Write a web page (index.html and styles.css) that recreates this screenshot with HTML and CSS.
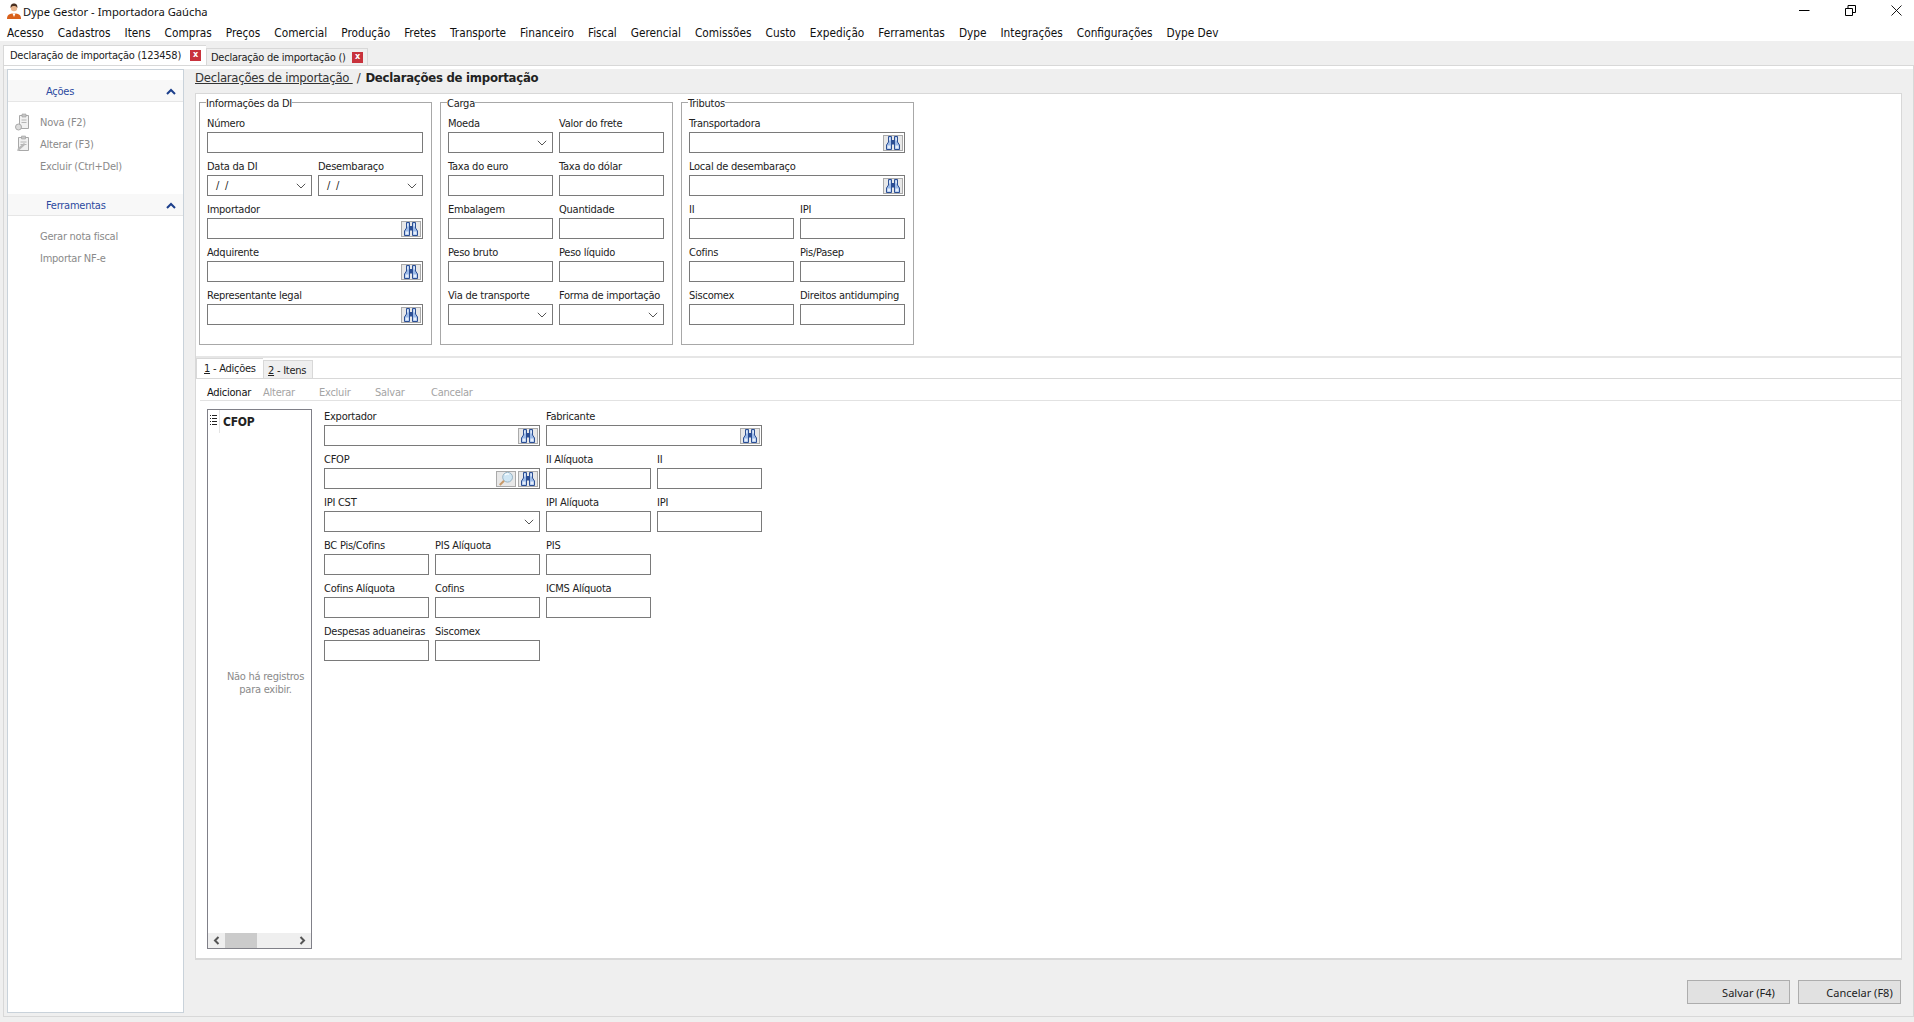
FILE: index.html
```html
<!DOCTYPE HTML>
<html>
    <head>
        <title>Dype Gestor - Importadora Gaúcha</title>
        <link rel="stylesheet" href="styles.css">
    </head>
    <body>
        <svg class="icon-defs" width="0" height="0">
            <symbol id="binoculars" viewBox="0 0 16 16">
                <path d="M3.500 1.500h3v13h-5v-4.500l2-3z" fill="#9dbbe8" stroke="#2c4f94"/>
                <path d="M12.500 1.500h-3v13h5v-4.500l-2-3z" fill="#9dbbe8" stroke="#2c4f94"/>
                <path d="M6.500 5h3v4.500h-3z" fill="#2c4f94"/>
                <path d="M2.500 10.500h3v3h-3zM10.500 10.500h3v3h-3z" fill="#e6eefa"/>
                <path d="M4 2.500h1.500v3H4zM10.500 2.500H12v3h-1.500z" fill="#dce8f8"/>
            </symbol>
            <symbol id="magnifier" viewBox="0 0 16 16">
                <circle cx="9.600" cy="6.200" r="4.900" fill="#cfe6f4" stroke="#9ab4c4"/>
                <path d="M7 4.200a3.400 3.400 0 0 1 4-1" fill="none" stroke="#fff" stroke-width="1.200"/>
                <path d="M6 9.800 1.800 14" stroke="#c79a6a" stroke-width="2"/>
            </symbol>
            <symbol id="chevron" viewBox="0 0 10 6">
                <path d="M.8.800 5 5 9.200.800" fill="none" stroke="#555" stroke-width="1"/>
            </symbol>
            <symbol id="chevron-up" viewBox="0 0 10 7">
                <path d="M1 6 5 2l4 4" fill="none" stroke="#1c3f8c" stroke-width="2"/>
            </symbol>
            <symbol id="clip-new" viewBox="0 0 16 18">
                <path d="M4.500 2.500h9v13h-9z" fill="#f1f1f1" stroke="#a8a8a8"/>
                <path d="M7 1h4v3H7z" fill="#c6c6c6" stroke="#a0a0a0" stroke-width=".6"/>
                <path d="M6.500 7h5M6.500 9.500h5" stroke="#b5b5b5"/>
                <circle cx="3.500" cy="14" r="3" fill="#dcdcdc" stroke="#aaa"/>
            </symbol>
            <symbol id="clip-edit" viewBox="0 0 16 18">
                <path d="M3.500 2.500h10v13h-10z" fill="#f1f1f1" stroke="#a8a8a8"/>
                <path d="M6.500 1h4v3h-4z" fill="#c6c6c6" stroke="#a0a0a0" stroke-width=".6"/>
                <path d="M5.500 7h6M5.500 9.500h6" stroke="#b5b5b5"/>
                <path d="M2 16l1-3 6-5 1.500 1.500-6 5.500z" fill="#b8b8b8"/>
            </symbol>
        </svg>

        <div class="title-bar">
            <svg class="app-icon" viewBox="0 0 16 16" width="16" height="16">
                <path d="M1 16c0-4 2-5.500 7-5.500s7 1.500 7 5.500z" fill="#d9601a"/>
                <path d="M6.500 10.500h3L8 14z" fill="#fff"/>
                <circle cx="8" cy="5" r="3.200" fill="#e8b48c"/>
                <path d="M4.600 5C4.400 1.500 6 .5 8 .5s3.600 1 3.400 4.500C10.500 3.300 9 3 8 3S5.500 3.300 4.600 5z" fill="#4a3020"/>
            </svg>
            <span class="title-text">Dype Gestor - Importadora Gaúcha</span>
            <div class="window-buttons">
                <svg width="11" height="11" viewBox="0 0 11 11"><path d="M0 5.500h10.500" stroke="#000"/></svg>
                <svg width="11" height="11" viewBox="0 0 11 11"><path d="M.5 3.500h7v7h-7zM3 3.500V.5h7.500v7H7.500" fill="none" stroke="#000"/></svg>
                <svg width="11" height="11" viewBox="0 0 11 11"><path d="M.5.500l10 10M10.500.500l-10 10" stroke="#000" stroke-width=".9"/></svg>
            </div>
        </div>

        <div class="menu-bar">
            <span>Acesso</span><span>Cadastros</span><span>Itens</span><span>Compras</span><span>Preços</span><span>Comercial</span><span>Produção</span><span>Fretes</span><span>Transporte</span><span>Financeiro</span><span>Fiscal</span><span>Gerencial</span><span>Comissões</span><span>Custo</span><span>Expedição</span><span>Ferramentas</span><span>Dype</span><span>Integrações</span><span>Configurações</span><span>Dype Dev</span>
        </div>

        <div class="doc-tabs">
            <div class="doc-tab active">Declaração de importação (123458)<span class="tab-close">x</span></div>
            <div class="doc-tab">Declaração de importação ()<span class="tab-close">x</span></div>
        </div>

        <div class="tab-page">
            <div class="side-panel">
                <div class="side-head"><span>Ações</span><svg width="10" height="7"><use href="#chevron-up"/></svg></div>
                <div class="side-items">
                    <div class="side-item"><svg width="16" height="18"><use href="#clip-new"/></svg>Nova (F2)</div>
                    <div class="side-item"><svg width="16" height="18"><use href="#clip-edit"/></svg>Alterar (F3)</div>
                    <div class="side-item">Excluir (Ctrl+Del)</div>
                </div>
                <div class="side-head"><span>Ferramentas</span><svg width="10" height="7"><use href="#chevron-up"/></svg></div>
                <div class="side-items">
                    <div class="side-item">Gerar nota fiscal</div>
                    <div class="side-item">Importar NF-e</div>
                </div>
            </div>

            <div class="main">
                <div class="breadcrumb"><a>Declarações de importação </a><span class="crumb-sep">/</span><b>Declarações de importação</b></div>

                <div class="panel">
                    <div class="top-groups">
                        <fieldset class="group">
                            <legend>Informações da DI</legend>
                            <div class="fields two">
                                <div class="field wide"><label>Número</label><div class="box"></div></div>
                                <div class="field"><label>Data da DI</label><div class="box"><span class="box-text">/ /</span><svg class="drop" width="10" height="6"><use href="#chevron"/></svg></div></div>
                                <div class="field"><label>Desembaraço</label><div class="box"><span class="box-text">/ /</span><svg class="drop" width="10" height="6"><use href="#chevron"/></svg></div></div>
                                <div class="field wide"><label>Importador</label><div class="box"><span class="look"><svg width="16" height="16"><use href="#binoculars"/></svg></span></div></div>
                                <div class="field wide"><label>Adquirente</label><div class="box"><span class="look"><svg width="16" height="16"><use href="#binoculars"/></svg></span></div></div>
                                <div class="field wide"><label>Representante legal</label><div class="box"><span class="look"><svg width="16" height="16"><use href="#binoculars"/></svg></span></div></div>
                            </div>
                        </fieldset>
                        <fieldset class="group">
                            <legend>Carga</legend>
                            <div class="fields two">
                                <div class="field"><label>Moeda</label><div class="box"><svg class="drop" width="10" height="6"><use href="#chevron"/></svg></div></div>
                                <div class="field"><label>Valor do frete</label><div class="box"></div></div>
                                <div class="field"><label>Taxa do euro</label><div class="box"></div></div>
                                <div class="field"><label>Taxa do dólar</label><div class="box"></div></div>
                                <div class="field"><label>Embalagem</label><div class="box"></div></div>
                                <div class="field"><label>Quantidade</label><div class="box"></div></div>
                                <div class="field"><label>Peso bruto</label><div class="box"></div></div>
                                <div class="field"><label>Peso líquido</label><div class="box"></div></div>
                                <div class="field"><label>Via de transporte</label><div class="box"><svg class="drop" width="10" height="6"><use href="#chevron"/></svg></div></div>
                                <div class="field"><label>Forma de importação</label><div class="box"><svg class="drop" width="10" height="6"><use href="#chevron"/></svg></div></div>
                            </div>
                        </fieldset>
                        <fieldset class="group">
                            <legend>Tributos</legend>
                            <div class="fields two">
                                <div class="field wide"><label>Transportadora</label><div class="box"><span class="look"><svg width="16" height="16"><use href="#binoculars"/></svg></span></div></div>
                                <div class="field wide"><label>Local de desembaraço</label><div class="box"><span class="look"><svg width="16" height="16"><use href="#binoculars"/></svg></span></div></div>
                                <div class="field"><label>II</label><div class="box"></div></div>
                                <div class="field"><label>IPI</label><div class="box"></div></div>
                                <div class="field"><label>Cofins</label><div class="box"></div></div>
                                <div class="field"><label>Pis/Pasep</label><div class="box"></div></div>
                                <div class="field"><label>Siscomex</label><div class="box"></div></div>
                                <div class="field"><label>Direitos antidumping</label><div class="box"></div></div>
                            </div>
                        </fieldset>
                    </div>

                    <div class="sub-tabs">
                        <div class="sub-tab active"><u>1</u> - Adições</div>
                        <div class="sub-tab"><u>2</u> - Itens</div>
                    </div>
                    <div class="toolbar">
                        <span class="tool-add">Adicionar</span>
                        <span>Alterar</span>
                        <span>Excluir</span>
                        <span>Salvar</span>
                        <span>Cancelar</span>
                    </div>

                    <div class="detail">
                        <div class="list-box">
                            <div class="list-head"><span class="list-marker"><svg width="7" height="11" viewBox="0 0 7 11"><path d="M0 .5h1M2 .5h5M0 3.500h1M2 3.500h5M0 6.500h1M2 6.500h5M0 9.500h1M2 9.500h5" stroke="#222"/></svg></span><b>CFOP</b></div>
                            <div class="list-empty">Não há registros<br>para exibir.</div>
                            <div class="list-scroll">
                                <svg width="7" height="9" viewBox="0 0 7 9"><path d="M5.500 1 2 4.500 5.500 8" fill="none" stroke="#555" stroke-width="2"/></svg>
                                <span class="scroll-thumb"></span>
                                <svg width="7" height="9" viewBox="0 0 7 9"><path d="M1.500 1 5 4.500 1.500 8" fill="none" stroke="#555" stroke-width="2"/></svg>
                            </div>
                        </div>
                        <div class="fields four">
                            <div class="field wide"><label>Exportador</label><div class="box"><span class="look"><svg width="16" height="16"><use href="#binoculars"/></svg></span></div></div>
                            <div class="field wide"><label>Fabricante</label><div class="box"><span class="look"><svg width="16" height="16"><use href="#binoculars"/></svg></span></div></div>
                            <div class="field wide"><label>CFOP</label><div class="box"><span class="look"><svg width="16" height="16"><use href="#magnifier"/></svg></span><span class="look"><svg width="16" height="16"><use href="#binoculars"/></svg></span></div></div>
                            <div class="field"><label>II Alíquota</label><div class="box"></div></div>
                            <div class="field"><label>II</label><div class="box"></div></div>
                            <div class="field wide"><label>IPI CST</label><div class="box"><svg class="drop" width="10" height="6"><use href="#chevron"/></svg></div></div>
                            <div class="field"><label>IPI Alíquota</label><div class="box"></div></div>
                            <div class="field"><label>IPI</label><div class="box"></div></div>
                            <div class="field"><label>BC Pis/Cofins</label><div class="box"></div></div>
                            <div class="field"><label>PIS Alíquota</label><div class="box"></div></div>
                            <div class="field end-row"><label>PIS</label><div class="box"></div></div>
                            <div class="field"><label>Cofins Alíquota</label><div class="box"></div></div>
                            <div class="field"><label>Cofins</label><div class="box"></div></div>
                            <div class="field end-row"><label>ICMS Alíquota</label><div class="box"></div></div>
                            <div class="field"><label>Despesas aduaneiras</label><div class="box"></div></div>
                            <div class="field"><label>Siscomex</label><div class="box"></div></div>
                        </div>
                    </div>
                </div>

                <div class="footer">
                    <button class="btn">Salvar (F4)</button>
                    <button class="btn">Cancelar (F8)</button>
                </div>
            </div>
        </div>
    </body>
</html>
```

FILE: styles.css
```css
* {
    box-sizing: border-box;
}
body {
    margin: 0;
    height: 1022px;
    overflow: hidden;
    display: flex;
    flex-direction: column;
    background-color: #efefef;
    font-family: "DejaVu Sans Condensed", "DejaVu Sans", sans-serif;
    font-stretch: condensed;
    font-size: 11px;
    letter-spacing: -0.25px;
    color: #222;
    white-space: nowrap;
}
.icon-defs {
    position: absolute;
}
.title-bar {
    height: 22px;
    flex: none;
    display: flex;
    align-items: center;
    padding: 0 0 0 6px;
    background-color: white;
    font-family: "Noto Sans", sans-serif;
    font-stretch: normal;
    font-size: 11.2px;
    letter-spacing: 0;
    color: #111;
}
.app-icon {
    margin-right: 1px;
}
.window-buttons {
    margin-left: auto;
    display: flex;
    gap: 35px;
    padding-right: 12px;
    margin-top: -1px;
}
.menu-bar {
    height: 19px;
    flex: none;
    display: flex;
    align-items: center;
    padding-top: 3px;
    background-color: white;
    font-size: 11.75px;
    letter-spacing: 0;
    color: #111;
}
.menu-bar span {
    padding: 0 7px;
}
.doc-tabs {
    height: 24px;
    flex: none;
    display: flex;
    align-items: flex-end;
    padding-left: 3px;
}
.doc-tab {
    height: 17px;
    display: flex;
    align-items: center;
    justify-content: space-between;
    width: 162px;
    padding: 0 4px 0 4px;
    background-color: #efefef;
    border: 1px solid #d8d8d8;
    border-bottom: none;
}
.doc-tab.active {
    width: 203px;
    height: 20px;
    padding: 0 5px 0 6px;
    background-color: white;
    border-right: none;
}
.tab-close {
    width: 11px;
    height: 11px;
    flex: none;
    background-color: #c8323c;
    color: white;
    font-size: 9px;
    font-weight: bold;
    line-height: 9px;
    text-align: center;
}
.tab-page {
    flex: none;
    height: 952px;
    margin-left: 3px;
    display: flex;
    padding: 0 11px 3px 3px;
    border: 1px solid #d8d8d8;
    background-color: #efefef;
    background-image: linear-gradient(white, white);
    background-size: 100% 3px;
    background-repeat: no-repeat;
}
.side-panel {
    width: 177px;
    margin-top: 3px;
    flex: none;
    background-color: white;
    border: 1px solid #c9d2da;
    padding-top: 10px;
    color: #8a8a8a;
}
.side-head {
    height: 22px;
    display: flex;
    align-items: center;
    justify-content: space-between;
    padding: 2px 7px 0 38px;
    background-color: #f8f8f8;
    border-bottom: 1px solid #e6e6e6;
    color: #2c4aa0;
}
.side-items {
    padding: 9px 0 17px;
}
.side-item {
    height: 22px;
    position: relative;
    display: flex;
    align-items: center;
    padding-left: 32px;
}
.side-item svg {
    position: absolute;
    left: 7px;
    top: 2px;
}
.main {
    flex: 1;
    min-width: 0;
    margin-left: 11px;
    display: flex;
    flex-direction: column;
}
.breadcrumb {
    height: 27px;
    flex: none;
    padding-bottom: 4px;
    font-size: 13px;
    display: flex;
    align-items: center;
    color: #333;
    white-space: pre;
}
.breadcrumb a {
    text-decoration: underline;
}
.crumb-sep {
    margin: 0 5px 0 4px;
}
.breadcrumb b {
    color: #222;
}
.panel {
    height: 867px;
    flex: none;
    background-color: white;
    border: 1px solid #d8d8d8;
    border-width: 1px 1px 2px 1px;
    display: flex;
    flex-direction: column;
}
.top-groups {
    height: 264px;
    flex: none;
    display: flex;
    gap: 8px;
    padding: 0 3px;
    border-bottom: 2px solid #e6e6e6;
}
.group {
    width: 233px;
    height: 252px;
    margin: -1px 0 0;
    padding: 0 7px;
    min-width: 0;
    border: 1px solid #a8a8a8;
}
.group legend {
    padding: 4px 0 0;
    line-height: 14px;
    margin-left: -1px;
}
.fields {
    display: grid;
    column-gap: 6px;
}
.two {
    grid-template-columns: 105px 105px;
}
.four {
    grid-template-columns: 105px 105px 105px 105px;
    align-content: start;
}
.field {
    height: 43px;
    display: flex;
    flex-direction: column;
    justify-content: flex-end;
    padding-bottom: 1px;
}
.wide {
    grid-column: span 2;
}
.end-row {
    grid-column-end: span 2;
}
.field label {
    height: 21px;
    line-height: 26px;
}
.box {
    height: 21px;
    flex: none;
    display: flex;
    align-items: center;
    justify-content: flex-end;
    gap: 2px;
    padding-right: 1px;
    border: 1px solid #7a7a7a;
    background-color: white;
}
.end-row .box {
    width: 105px;
}
.box-text {
    margin-right: auto;
    padding-left: 8px;
    word-spacing: 3px;
}
.drop {
    margin-right: 4px;
}
.look {
    width: 20px;
    height: 16px;
    display: flex;
    align-items: center;
    justify-content: center;
    background-color: #e8e8e8;
    border: 1px solid #aaa;
}
.sub-tabs {
    height: 21px;
    flex: none;
    display: flex;
    align-items: flex-end;
    border-bottom: 1px solid #d8d8d8;
}
.sub-tab {
    height: 18px;
    display: flex;
    align-items: center;
    white-space: pre;
    width: 50px;
    padding: 1px 4px 0;
    background-color: #efefef;
    border: 1px solid #d8d8d8;
    border-bottom: none;
}
.sub-tab.active {
    height: 20px;
    width: 67px;
    padding: 0 7px;
    background-color: white;
    border-right: none;
}
.toolbar {
    height: 22px;
    flex: none;
    display: flex;
    align-items: center;
    margin-left: 4px;
    padding: 5px 0 0 7px;
    border-bottom: 1px solid #e2e2e2;
    color: #a4a4a4;
}
.toolbar span {
    width: 56px;
}
.toolbar .tool-add {
    color: #111;
}
.detail {
    flex: 1;
    min-height: 0;
    display: flex;
    gap: 12px;
    padding: 8px 0 9px 11px;
}
.detail .fields {
    margin-top: -5px;
}
.list-box {
    width: 105px;
    flex: none;
    display: flex;
    flex-direction: column;
    border: 1px solid #808088;
}
.list-head {
    height: 23px;
    flex: none;
    display: flex;
    align-items: center;
    font-size: 12px;
}
.list-marker {
    width: 12px;
    height: 100%;
    display: flex;
    justify-content: center;
    padding-top: 5px;
    margin-right: 3px;
    border-right: 1px solid #e4e4e4;
}
.list-empty {
    flex: 1;
    display: flex;
    align-items: center;
    justify-content: center;
    text-align: center;
    padding-left: 12px;
    line-height: 13px;
    color: #8a8a8a;
}
.list-scroll {
    height: 15px;
    flex: none;
    display: flex;
    align-items: center;
    justify-content: space-between;
    position: relative;
    padding: 0 5px;
    background-color: #efefef;
}
.scroll-thumb {
    position: absolute;
    left: 17px;
    top: 0;
    width: 32px;
    height: 15px;
    background-color: #cbcbcb;
}
.footer {
    flex: 1;
    display: flex;
    justify-content: flex-end;
    gap: 8px;
    padding: 20px 1px 0 0;
}
.btn {
    width: 103px;
    height: 24px;
    padding: 0 0 0 20px;
    text-align: center;
    background-color: #e1e1e1;
    border: 1px solid #adadad;
    font-family: "Noto Sans", sans-serif;
    font-size: 11px;
    letter-spacing: 0;
    color: #222;
}
```
